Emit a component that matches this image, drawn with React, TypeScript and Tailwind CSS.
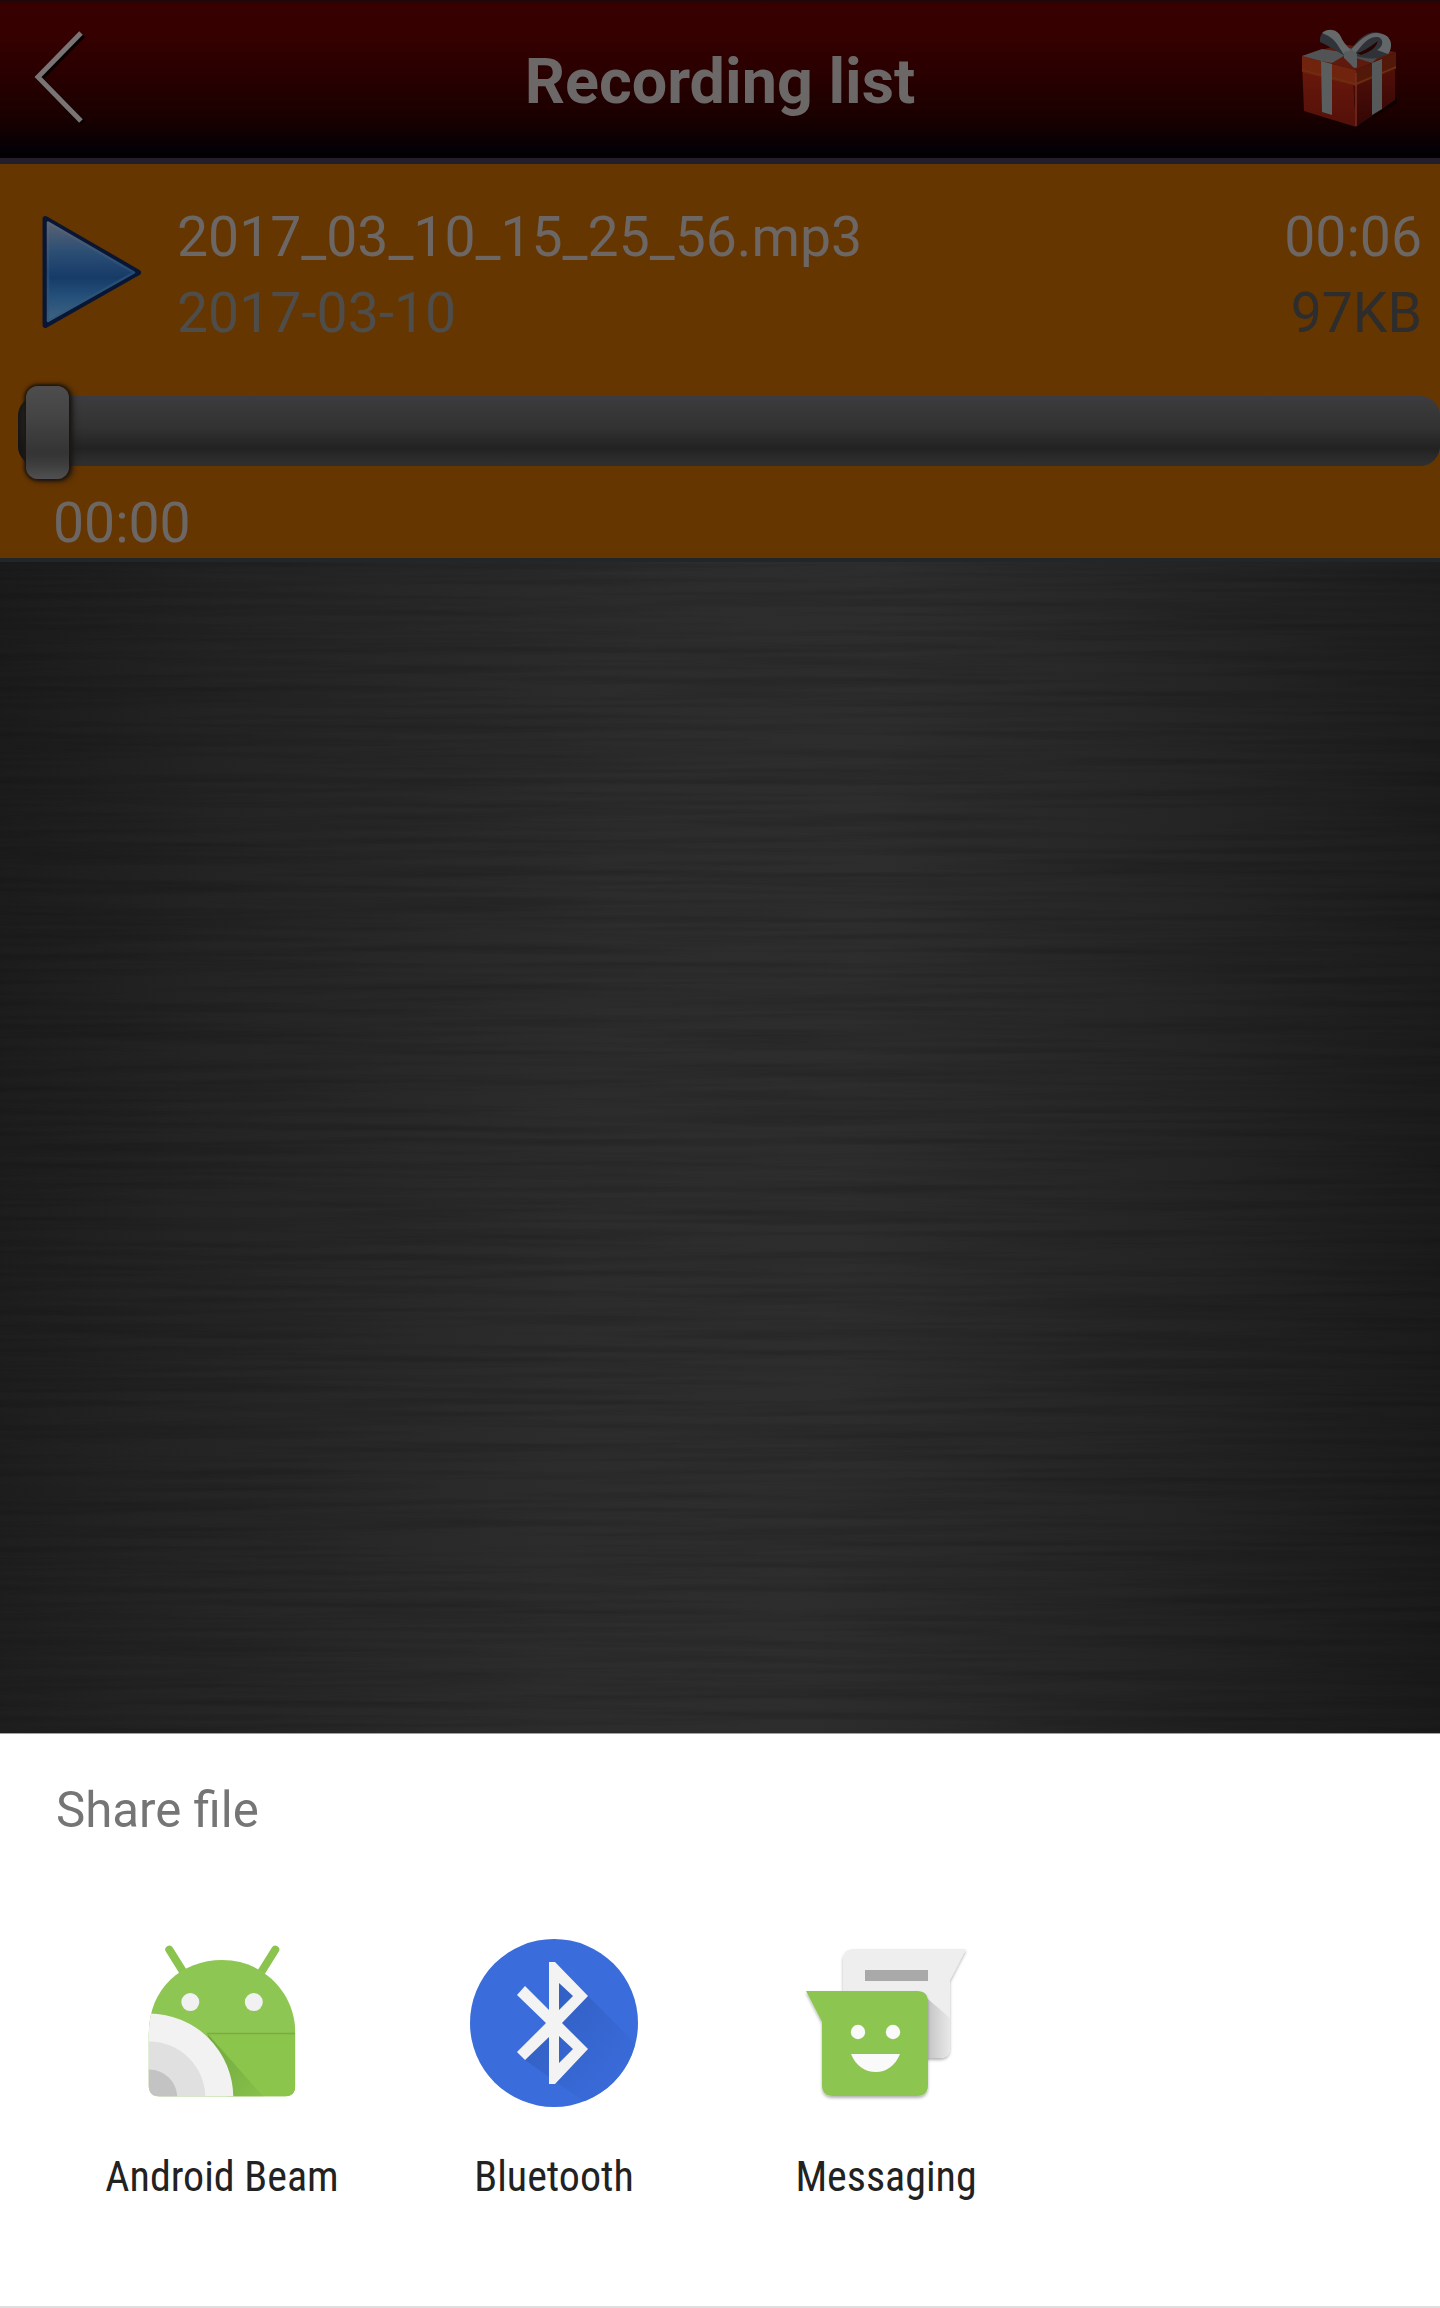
import type { ReactNode } from "react";

function BackIcon() {
  return (
    <svg className="h-[104px] w-[60px]" viewBox="0 0 60 104" fill="none">
      <path d="M51 13 L8 57 L51 101" transform="translate(2 2)" stroke="#080000" strokeWidth="6" />
      <path d="M51 13 L8 57 L51 101" stroke="#7b7474" strokeWidth="5" />
    </svg>
  );
}

function GiftIcon() {
  return (
    <svg className="h-[110px] w-[110px]" viewBox="0 0 110 110">
      <defs>
        <linearGradient id="giftLeft" x1="0" y1="0" x2="0" y2="1">
          <stop offset="0" stopColor="#6b190b" />
          <stop offset="1" stopColor="#541009" />
        </linearGradient>
        <linearGradient id="giftRight" x1="0" y1="0" x2="0" y2="1">
          <stop offset="0" stopColor="#551008" />
          <stop offset="1" stopColor="#310605" />
        </linearGradient>
      </defs>
      <path d="M14 88 L65 103 L106 76 L106 82 L65 108Z" fill="#0d0202" />
      <path d="M11 41 L62 56 L65 106 L13 90Z" fill="url(#giftLeft)" />
      <path d="M62 56 L104 43 L104 79 L65 106Z" fill="url(#giftRight)" />
      <path d="M11 35 L50 23 L105 31 L65 49Z" fill="#5f190d" />
      <path d="M11 35 L65 49 V65 L11 51Z" fill="#70240e" />
      <path d="M65 49 L105 31 V48 L65 65Z" fill="#52190a" />
      <path d="M11 49 L65 63 L105 46" fill="none" stroke="#6c3013" strokeWidth="1.6" />
      <path d="M65 52 V105" stroke="#782d22" strokeWidth="1.5" />
      <path d="M11 35 L31 28 L58 32 L41 42 L30 40Z" fill="#515355" />
      <path d="M50 25 L89 34 L81 42 L62 36Z" fill="#4a4c4e" />
      <path d="M30 40 L41 43 V94 L31 91Z" fill="#5b5e5e" />
      <path d="M81 42 L91 38 V88 L81 94Z" fill="#56595a" />
      <path d="M29 21 C36 24 41 27 54 35 L61 31 C55 25 49 16 47 13 C37 5 28 11 29 21Z" fill="#2f343a" />
      <path d="M31 12 C38 6 47 9 50 16 C53 23 57 26 62 31 L54 35 C45 22 44 17 31 12Z" fill="#66696a" />
      <path d="M57 33 C69 14 80 8 92 13 C101 16 101 28 97 33 C85 39 77 38 65 35Z" fill="#2f3338" />
      <path d="M58 31 C69 18 79 9 91 13 C103 16 101 29 97 33 L86 29 C94 25 92 16 86 16 C76 15 69 27 63 34Z" fill="#646769" />
      <path d="M66 32 C74 30 78 26 87 20 C85 27 79 31 70 34Z" fill="#280304" />
      <path d="M53 31 L61 29 L66 33 L66 46 C63 49 61 44 53 37Z" fill="#595d5f" />
    </svg>
  );
}

function PlayIcon() {
  return (
    <svg className="h-[116px] w-[102px]" viewBox="0 0 102 116">
      <defs>
        <linearGradient id="playFill" x1="0" y1="0" x2="0" y2="1">
          <stop offset="0" stopColor="#596171" />
          <stop offset=".3" stopColor="#2b4e75" />
          <stop offset=".56" stopColor="#163b67" />
          <stop offset=".75" stopColor="#24507a" />
          <stop offset="1" stopColor="#416481" />
        </linearGradient>
        <linearGradient id="playRim" x1="0" y1="0" x2="0" y2="1">
          <stop offset="0" stopColor="#5c6575" />
          <stop offset=".5" stopColor="#244b75" />
          <stop offset="1" stopColor="#365b7b" />
        </linearGradient>
      </defs>
      <path d="M5.500 5 L98 58.500 L5.500 111Z" fill="#091633" stroke="#091633" strokeWidth="6" strokeLinejoin="round" />
      <path d="M8 8.500 L94 58.500 L8 107Z" fill="url(#playFill)" stroke="url(#playRim)" strokeWidth="2.5" strokeLinejoin="round" />
    </svg>
  );
}

function BeamIcon() {
  return (
    <svg className="h-[192px] w-[192px]" viewBox="0 0 192 192">
      <defs>
        <clipPath id="beamBody">
          <path d="M21.500 104 C22 60 54 31.500 95 31.500 C136 31.500 168 64 168 104 V157 Q168 168 157 168 H32.500 Q21.500 168 21.500 157Z" />
        </clipPath>
        <linearGradient id="beamShade" x1="0" y1="0" x2="1" y2="1">
          <stop offset="0" stopColor="#5e9434" />
          <stop offset="1" stopColor="#87bf4c" />
        </linearGradient>
      </defs>
      <g transform="translate(1.300 .6)">
        <path d="M42 21 L57 45 M148 21 L133 45" stroke="#8bc34f" strokeWidth="8" strokeLinecap="round" />
        <g clipPath="url(#beamBody)">
          <path d="M20 30 H170 V170 H20Z" fill="#8ec653" />
          <path d="M20 105 H170 V170 H20Z" fill="#8bc54b" />
          <path d="M80 105 H168" stroke="#78ad42" strokeWidth="1.5" />
          <path d="M80 105 L138 170 H100Z" fill="url(#beamShade)" opacity=".6" />
          <circle cx="22" cy="169" r="84" fill="#f2f2f2" />
          <circle cx="22" cy="169" r="56" fill="#e0e0e0" />
          <circle cx="22" cy="169" r="28" fill="#c3c3c3" />
        </g>
        <circle cx="63" cy="73.500" r="9" fill="#f1f1f1" />
        <circle cx="126.500" cy="73.500" r="9" fill="#f1f1f1" />
      </g>
    </svg>
  );
}

function BluetoothIcon() {
  return (
    <svg className="h-[192px] w-[192px]" viewBox="0 0 192 192">
      <defs>
        <clipPath id="btDisc"><circle cx="96" cy="95" r="84" /></clipPath>
        <linearGradient id="btShade" x1="0" y1="0" x2="1" y2="1">
          <stop offset="0" stopColor="#2c55af" />
          <stop offset=".75" stopColor="#386ad8" />
        </linearGradient>
      </defs>
      <circle cx="96" cy="95" r="84" fill="#3b6cdb" />
      <g clipPath="url(#btDisc)">
        <path d="M95 34 L130 68 L190 128 L150 190 L64 130 L93 95Z" fill="url(#btShade)" opacity=".75" />
      </g>
      <path fillRule="evenodd" fill="#f3f3f3" d="M91 34 H97 L130 68 L104 95 L130 121 L97 156 H91 V109 L67 132 L59 124 L88 95 L59 67 L67 58 L91 82Z M101 55 V82 L115 68Z M101 108 V135 L115 121Z" />
    </svg>
  );
}

function MessagingIcon() {
  return (
    <svg className="h-[192px] w-[192px]" viewBox="0 0 192 192">
      <defs>
        <filter id="msgShadow" x="-20%" y="-20%" width="140%" height="140%">
          <feDropShadow dx="0" dy="2" stdDeviation="1.500" floodColor="#000000" floodOpacity=".3" />
        </filter>
        <linearGradient id="msgShade" x1="0" y1="0" x2="1" y2="0">
          <stop offset="0" stopColor="#bcbcbc" />
          <stop offset="1" stopColor="#e8e8e8" />
        </linearGradient>
      </defs>
      <g transform="translate(-2 2)">
        <g filter="url(#msgShadow)">
          <path d="M66 19 H178 L162 50 V117 Q162 128 151 128 H66 Q55 128 55 117 V30 Q55 19 66 19Z" fill="#eeeeee" />
        </g>
        <path d="M134 64 L162 88 V117 Q162 128 151 128 H138Z" fill="url(#msgShade)" />
        <path d="M77 40 H140 V51 H77Z" fill="#a9a9a9" />
        <g filter="url(#msgShadow)">
          <path d="M18 61 H129 Q140 61 140 72 V155 Q140 166 129 166 H45 Q34 166 34 155 V92Z" fill="#8cc651" />
        </g>
        <circle cx="70" cy="102" r="7.200" fill="#fafafa" />
        <circle cx="105" cy="102" r="7.200" fill="#fafafa" />
        <path d="M63 124 H112 C107 136 98 142 88 142 C77 142 68 136 63 124Z" fill="#fafafa" />
      </g>
    </svg>
  );
}

function ShareTarget({ icon, label }: { icon: ReactNode; label: string }) {
  return (
    <button className="flex w-[332px] flex-col items-center">
      {icon}
      <span className="mt-[29px] whitespace-nowrap font-['Roboto_Condensed',Roboto,sans-serif] text-[42px] leading-[56px] text-[#222222] [font-stretch:75%]">{label}</span>
    </button>
  );
}

function BrushedMetal() {
  return (
    <svg className="block h-full w-full" preserveAspectRatio="none">
      <filter id="brushed" x="0" y="0" width="100%" height="100%" colorInterpolationFilters="sRGB">
        <feTurbulence type="fractalNoise" baseFrequency="0.003 0.13" numOctaves="3" seed="8" />
        <feColorMatrix type="matrix" values="0 0 0 0 0  0 0 0 0 0  0 0 0 0 0  0.32 0 0 0 -0.12" />
      </filter>
      <rect width="100%" height="100%" filter="url(#brushed)" />
    </svg>
  );
}

export default function App() {
  return (
    <div className="flex h-[2308px] w-[1440px] flex-col overflow-hidden bg-[#222222] font-[Roboto,sans-serif]">
      <header className="flex h-[164px] shrink-0 items-start justify-between border-b-[6px] border-[#231e2a] bg-[linear-gradient(to_bottom,#1c0808_0,#380000_4px,#360000_35px,#260000_85px,#190000_120px,#050006_148px,#020000_158px)] px-[30px]">
        <button aria-label="Back" className="mt-5 w-[180px]"><BackIcon /></button>
        <h1 className="pt-[42px] text-[62.900px] font-bold leading-20 text-[#6b6867]">Recording list</h1>
        <button aria-label="Gift" className="mt-[21px] flex w-[180px] justify-end pr-[9px]"><GiftIcon /></button>
      </header>
      <section className="flex h-[394px] shrink-0 flex-col bg-[#663600]">
        <div className="flex h-[222px] pl-10 pr-[18px] pt-9">
          <button aria-label="Play" className="mt-[14px] h-[116px] w-[102px]"><PlayIcon /></button>
          <div className="ml-[35px] flex-1 text-[55.300px] leading-[75.500px]">
            <div className="flex justify-between text-[#6c6765]"><span>2017_03_10_15_25_56.mp3</span><span>00:06</span></div>
            <div className="flex justify-between text-[#4e4d49]"><span>2017-03-10</span><span className="text-[#2d2d2d]">97KB</span></div>
          </div>
        </div>
        <div className="flex h-[89px] items-center pl-[18px]">
          <div className="flex h-[70px] flex-1 items-center rounded-[20px] bg-[linear-gradient(to_bottom,#3c3c44_0,#393939_14%,#323232_45%,#222222_75%,#292929_85%,#303032_100%)] pl-[8px] shadow-[inset_14px_0_8px_-8px_#151515]">
            <div className="mt-1 h-[93px] w-[43px] shrink-0 rounded-[12px] bg-[linear-gradient(to_bottom,#4d4d4d,#454545_30%,#343434_72%,#3d3d3d_84%,#505052)] shadow-[0_0_3px_2px_#1e1711,3px_1px_7px_#161616]" />
          </div>
        </div>
        <div className="mt-[16px] pl-[53px] text-[55.300px] leading-[66px] text-[#6c6765]">00:00</div>
      </section>
      <main className="flex-1 border-t-[4px] border-[#20262a] bg-[linear-gradient(95deg,#1b1b1b_0%,#232323_15%,#2c2c2c_42%,#2d2d2d_58%,#242424_80%,#1a1a1a_100%)]">
        <BrushedMetal />
      </main>
      <section className="flex h-[575px] shrink-0 flex-col border-b-2 border-b-[#dedede] border-t border-t-[#a0a0a0] bg-white">
        <h2 className="mt-[46px] pl-14 text-[49.200px] leading-[60px] text-[#757575]">Share file</h2>
        <div className="mt-[88px] flex pl-[56px]">
          <ShareTarget icon={<BeamIcon />} label="Android Beam" />
          <ShareTarget icon={<BluetoothIcon />} label="Bluetooth" />
          <ShareTarget icon={<MessagingIcon />} label="Messaging" />
        </div>
      </section>
    </div>
  );
}
